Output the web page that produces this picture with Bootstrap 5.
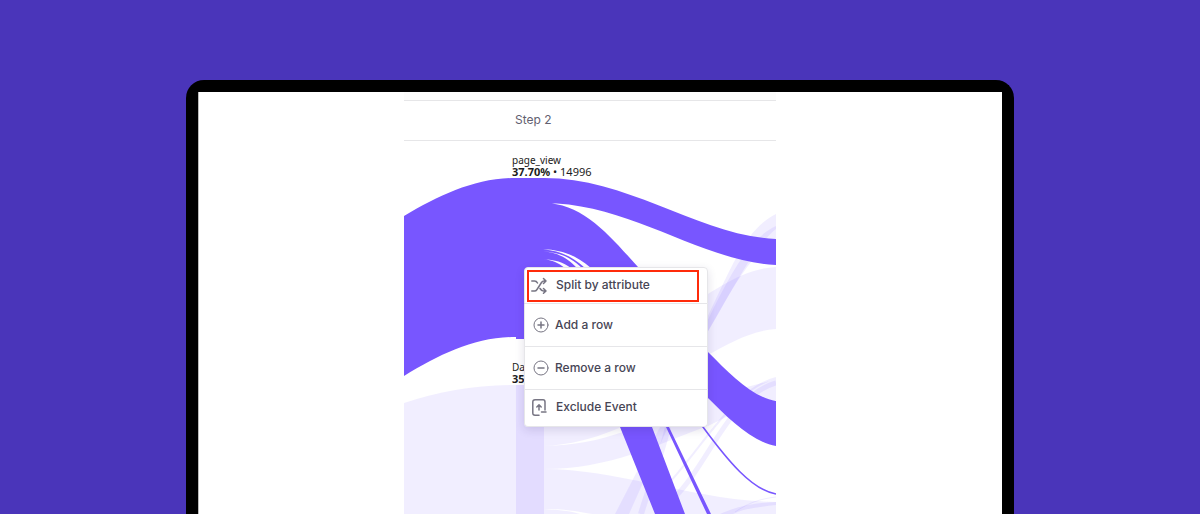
<!DOCTYPE html>
<html lang="en">
<head>
<meta charset="utf-8">
<meta name="viewport" content="width=device-width, initial-scale=1">
<title>Flow report</title>
<link href="https://cdn.jsdelivr.net/npm/bootstrap@5.3.0/dist/css/bootstrap.min.css" rel="stylesheet">
<style>
  body { background: #4a35ba; font-family: Inter, "Liberation Sans", sans-serif; }
  .stage { padding-top: 80px; }
  .device { width: 69%; border: 12px solid #000; border-bottom: 0; border-radius: 18px 18px 0 0; }
  .screen { background: #fff; padding-right: 20px; box-shadow: inset 1px 0 0 #bbb; }
  .report { width: 372px; }
  .toolbar-edge { height: 9px; background: #fcfcfc; border-bottom: 1px solid #e6e6e8; }
  .step-head { height: 40px; padding: 0 0 2px 111px; border-bottom: 1px solid #e6e6e8; font-size: 12px; color: #626070; }
  .flow svg { display: block; width: 100%; }
  .node-label { font-family: "Noto Sans", sans-serif; font-size: 10px; line-height: 12px; color: #1b1b20; left: 108px; }
  .node-value { font-size: 11px; }
  .label-first { top: 13px; }
  .label-second { top: 220px; }
  .flow-menu { left: 120px; top: 126px; width: 184px; border-radius: 4px; --bs-list-group-border-radius: 4px; --bs-list-group-border-color: #e6e6e9; box-shadow: 0 3px 10px rgba(40, 30, 90, .14); }
  .flow-menu .list-group-item { height: 43px; padding: 0 0 0 8px; gap: 6px; font-size: 12px; font-weight: 500; color: #474555; }
  .flow-menu .list-group-item.edge-row { height: 37px; padding: 0 0 2px 7px; gap: 8px; }
  .flow-menu svg { width: 16px; height: 18px; flex: none; color: #777583; }
  .flow-menu .list-group-item.picked { padding: 2px 8px 2px 2px; }
  .picked-box { height: 32px; border: 2px solid #ff2b0a; padding: 0 0 2px 2px; gap: 9px; }
</style>
</head>
<body>
<main class="stage vh-100 overflow-hidden d-flex justify-content-center">
  <div class="device d-flex">
    <div class="screen flex-grow-1 d-flex justify-content-center">
      <section class="report">
        <div class="toolbar-edge"></div>
        <div class="step-head d-flex align-items-center">Step 2</div>
        <div class="flow position-relative">
          <svg viewBox="404 141 372 373" aria-hidden="true">
            <g fill="#7856ff" fill-opacity=".1">
              <path d="M404 403C440 391 475 385 516 385V514H404Z"/>
              <path d="M544 385H650V415C610 432 585 444 544 446Z"/>
              <path d="M544 446C605 445 640 425 680 407C710 394 745 389 776 379V400C750 402 735 413 708 426C655 445 610 469 544 469Z"/>
              <path d="M544 469C620 469 690 500 776 502V514H592C575 511 565 509 544 509Z"/>
              <path d="M544 509C560 510 570 511 580 514H544Z"/>
              <path d="M680 311C715 291 740 269 776 267V329C750 331 730 343 708 355L680 368Z"/>
              <path d="M696 340C725 285 740 232 776 214V243C750 250 727 300 700 345Z"/>
              <path d="M696 345C722 290 745 240 776 226V229C750 250 728 300 702 341Z"/>
              <path d="M615 514L660 427H668L629 514Z"/>
              <path d="M720 514C740 505 755 503 776 502V505C760 507 745 508 733 514Z"/>
            </g>
            <g fill="none" stroke="#7856ff" stroke-opacity=".1">
              <path stroke-width="6" d="M641 514C648 490 660 460 668 427"/>
              <path stroke-width="5" d="M675 497C710 462 728 397 776 383"/>
              <path stroke-width="2" d="M662 491C705 445 733 389 776 378"/>
              <path d="M735 512C750 502 760 499 776 497"/>
            </g>
            <path fill="#e3dcff" d="M516 385H544V514H516Z"/>
            <g fill="#7856ff">
              <path d="M404 216C440 195 475 178 516 178H544C630 178 700 236 776 239V265C700 261 630 203 544 203C583 203 610 236 638 267L708 352C730 374 752 397 776 401V446C752 442 728 418 708 398L640 330L544 339H516V337C475 337 440 354 404 376Z"/>
              <path d="M600 380L620 427L655 514H685L652 427L635 380Z"/>
              <path d="M650 395L666 427L707 514H711L669 427L655 395Z"/>
            </g>
            <path fill="none" stroke="#7856ff" stroke-width="1.6" d="M690 410L703 427C728 461 752 490 776 494"/>
            <g fill="#fff">
              <path d="M543 249.3C562 250 576 255 591 268H585C572 256 560 251 543 249.3Z"/>
              <path d="M543 251.3C562 253 571 258 582 268H577C568 259 560 253 543 251.3Z"/>
              <path d="M543 259.3C555 260 563 262 571 268H565C558 263 553 260 543 259.3Z"/>
            </g>
          </svg>
          <div class="node-label label-first position-absolute text-nowrap">page_view<div class="node-value"><strong>37.70%</strong> • 14996</div></div>
          <div class="node-label label-second position-absolute text-nowrap">Da<div class="node-value"><strong>35</strong></div></div>
          <div class="flow-menu list-group position-absolute">
            <button type="button" class="list-group-item list-group-item-action edge-row picked">
              <span class="picked-box d-flex align-items-center">
                <svg viewBox="0 0 16 18" fill="none" stroke="currentColor" stroke-width="1.5" stroke-linecap="round" stroke-linejoin="round"><path d="M.8 5H3.5Q5.500 5 6.500 7M.8 15H3.500Q5 15 6 13.500L10.500 6.500Q11.500 5 13 5H15M9 12.500Q10.500 15 12.500 15H15M12.500 2.500L15 5L12.500 7.500M12.500 12.500L15 15L12.500 17.300"/></svg>
                Split by attribute</span>
            </button>
            <button type="button" class="list-group-item list-group-item-action d-flex align-items-center">
              <svg viewBox="0 0 16 18" fill="none" stroke="currentColor" stroke-linecap="round"><circle cx="8" cy="9" r="7"/><path stroke-width="1.5" d="M5 9H11M8 6V12"/></svg>
              Add a row</button>
            <button type="button" class="list-group-item list-group-item-action d-flex align-items-center">
              <svg viewBox="0 0 16 18" fill="none" stroke="currentColor" stroke-linecap="round"><circle cx="8" cy="9" r="7"/><path stroke-width="1.5" d="M5 9H11"/></svg>
              Remove a row</button>
            <button type="button" class="list-group-item list-group-item-action edge-row d-flex align-items-center">
              <svg viewBox="0 0 16 18" fill="none" stroke="currentColor" stroke-width="1.5" stroke-linecap="round" stroke-linejoin="round"><path d="M7 17.200H3Q.8 17.200 .8 15V4Q.8 1.800 3 1.800H11Q13 1.800 13 4V12M9.500 14H14M7 12V7M4.800 9L7 6.800L9.200 9"/></svg>
              Exclude Event</button>
          </div>
        </div>
      </section>
    </div>
  </div>
</main>
<script src="https://cdn.jsdelivr.net/npm/bootstrap@5.3.0/dist/js/bootstrap.bundle.min.js"></script>
</body>
</html>
